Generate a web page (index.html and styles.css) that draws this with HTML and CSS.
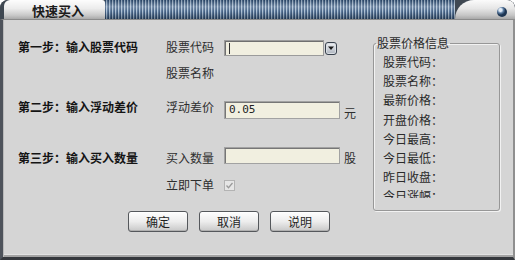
FILE: index.html
```html
<!DOCTYPE html>
<html lang="zh-CN">
<head>
<meta charset="utf-8">
<title>快速买入</title>
<link rel="stylesheet" href="styles.css">
</head>
<body>
<div class="window">
  <div class="titlebar">
    <div class="tab">快速买入</div>
    <div class="stripes"></div>
    <div class="corner"><span class="close"></span></div>
  </div>
  <div class="client">
    <div class="form">
      <div class="row r1">
        <span class="step">第一步：输入股票代码</span>
        <span class="label">股票代码</span>
        <div class="combo">
          <span class="field"><i class="caret"></i></span>
          <span class="drop"><svg width="8" height="6" viewBox="0 0 8 6"><path d="M1 1.5h6L4 5z" fill="#1a1a1a"/></svg></span>
        </div>
      </div>
      <div class="row r2">
        <span></span>
        <span class="label">股票名称</span>
      </div>
      <div class="row r3">
        <span class="step">第二步：输入浮动差价</span>
        <span class="label">浮动差价</span>
        <span class="input price">0.05</span>
        <span class="unit low">元</span>
      </div>
      <div class="row r4">
        <span class="step">第三步：输入买入数量</span>
        <span class="label">买入数量</span>
        <span class="input qty"></span>
        <span class="unit">股</span>
      </div>
      <div class="row r5">
        <span></span>
        <span class="label">立即下单</span>
        <span class="check"><svg width="9" height="9" viewBox="0 0 9 9"><path d="M1.5 4.5l2 2.2L7.5 2" fill="none" stroke="#9a9a9a" stroke-width="1.3"/></svg></span>
      </div>
      <div class="buttons">
        <button class="btn">确定</button>
        <button class="btn">取消</button>
        <button class="btn">说明</button>
      </div>
    </div>
    <fieldset class="group">
      <legend>股票价格信息</legend>
      <div class="list">
        <div>股票代码：</div>
        <div>股票名称：</div>
        <div>最新价格：</div>
        <div>开盘价格：</div>
        <div>今日最高：</div>
        <div>今日最低：</div>
        <div>昨日收盘：</div>
        <div>今日涨幅：</div>
      </div>
    </fieldset>
  </div>
</div>
</body>
</html>
```

FILE: styles.css
```css
* { box-sizing: border-box; }
html, body { margin: 0; padding: 0; background: #ffffff; }

.window {
  width: 515px;
  height: 260px;
  display: flex;
  flex-direction: column;
  border-radius: 8px 8px 0 0;
  overflow: hidden;
  background: #4a4f57;
  font-family: "Noto Sans CJK SC", "Noto Sans", sans-serif;
  font-size: 12px;
  color: #2a2a2a;
}

.titlebar {
  height: 19px;
  flex: none;
  display: flex;
  background: #3f4852;
}

.tab {
  width: 101px;
  margin-left: 4px;
  padding: 2px 0 0 28px;
  border-radius: 6px 3px 0 0;
  background: linear-gradient(#fdfdfd, #ececec 45%, #c9c9c9 80%, #a9a9a9);
  font-size: 13px;
  font-weight: bold;
  line-height: 17px;
  color: #1c1c1c;
}

.stripes {
  flex: 1;
  background:
    linear-gradient(to bottom, rgba(0,0,0,0.15), rgba(255,255,255,0.3) 35%, rgba(255,255,255,0.12) 60%, rgba(0,0,0,0.3)),
    repeating-linear-gradient(90deg, #2d4c72 0 1px, #a3b9d0 1px 2px, #4a6a90 2px 3px);
}

.corner {
  width: 60px;
  display: flex;
  justify-content: flex-end;
  padding: 7px 8px 0 0;
  border-radius: 22px 8px 0 0;
  background: linear-gradient(#fbfbfb, #e6e6e6 45%, #c6c6c6 80%, #a8a8a8);
}

.close {
  width: 10px;
  height: 10px;
  border-radius: 50%;
  background: radial-gradient(circle at 35% 30%, #dfe9f4 0 1.5px, #5d7ea3 3px, #1d3552 5px);
}

.client {
  flex: 1;
  display: flex;
  background: #d5d5d5;
  border-top: 1px solid #8b8b8b;
  border-left: 3px solid #4e535b;
  border-right: 2px solid #8f8f8f;
  border-bottom: 3px solid #35383d;
  box-shadow: inset 1px 0 0 #b9b9b9, inset 0 -2px 0 #a3a3a3, inset 0 -3px 0 #e2e2e2;
}

.form {
  flex: none;
  width: 355px;
  padding-left: 15px;
}

.row {
  display: grid;
  grid-template-columns: 148px 58px 116px auto;
  grid-template-rows: 20px;
  align-items: center;
  line-height: 16px;
}

.r1 { margin-top: 17px; }
.r2 { margin-top: 6px; }
.r3 { margin-top: 14px; }
.r4 { margin-top: 31px; }
.r5 { margin-top: 7px; }

.step {
  font-weight: bold;
  color: #141414;
}

.label { color: #2e2e2e; }

.combo {
  display: flex;
  align-items: center;
  height: 16px;
  margin-top: 2px;
}

.field {
  width: 100px;
  height: 16px;
  display: flex;
  align-items: center;
  padding-left: 4px;
  background: #f1efe0;
  border: 1px solid #9b9b9b;
  box-shadow: inset 1px 1px 0 #6f6f6f;
}

.caret {
  width: 1px;
  height: 11px;
  background: #333;
}

.drop {
  width: 12px;
  height: 13px;
  margin-left: 1px;
  display: flex;
  align-items: center;
  justify-content: center;
  border: 1px solid #38414d;
  border-radius: 3px;
  background: linear-gradient(#eef0f3, #aeb5bf);
  box-shadow: inset 0 0 0 1px #d9dde2;
}

.input {
  height: 18px;
  background: #f1efe0;
  border: 1px solid #a2a2a2;
  box-shadow: inset 1px 1px 0 #767676;
}

.price {
  align-self: start;
  margin-top: 4px;
  padding-left: 4px;
  font-family: "DejaVu Sans Mono", "Liberation Mono", monospace;
  font-size: 11px;
  line-height: 16px;
  color: #222;
}

.qty {
  height: 17px;
  align-self: start;
  margin-top: -1px;
}

.unit { margin-left: 4px; color: #2e2e2e; }
.unit.low { align-self: start; margin-top: 8px; }

.check {
  width: 11px;
  height: 11px;
  display: flex;
  align-items: center;
  justify-content: center;
  background: #e6e6e6;
  border: 1px solid #b3b3b3;
}

.buttons {
  display: flex;
  gap: 11px;
  margin-top: 16px;
  margin-left: 110px;
}

.btn {
  width: 60px;
  height: 21px;
  padding: 0;
  border: 1px solid #55585c;
  border-radius: 3px;
  background: linear-gradient(#fefefe, #ededed 50%, #c8c8c8);
  box-shadow: inset 0 1px 0 #ffffff, inset 0 -1px 0 #b0b0b0;
  font-family: inherit;
  font-size: 12px;
  line-height: 19px;
  color: #1f1f1f;
}

.group {
  margin: 15px 13px 0 auto;
  width: 127px;
  height: 176px;
  padding: 0 0 0 9px;
  border: 1px solid #979797;
  border-radius: 3px;
  box-shadow: inset 1px 1px 0 #f2f2f2, 1px 1px 0 #f2f2f2;
  min-width: 0;
}

.group legend {
  margin-left: -7px;
  padding: 0 1px;
  line-height: 16px;
  color: #2a2a2a;
}

.list {
  margin-top: 1px;
  height: 146px;
  overflow: hidden;
  line-height: 19.2px;
  color: #2a2a2a;
}
```
